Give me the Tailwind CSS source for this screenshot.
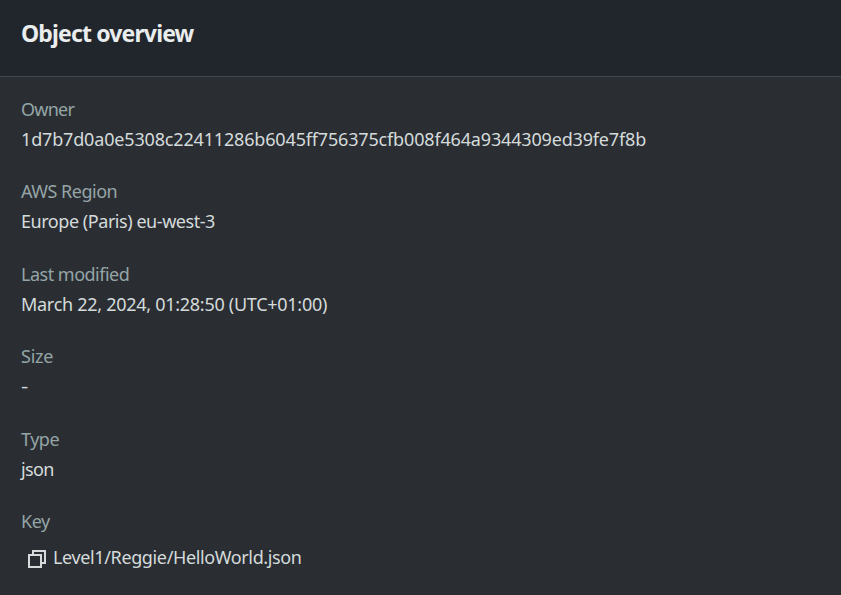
<!DOCTYPE html>
<html lang="en"><head><meta charset="utf-8"><title>Object overview</title>
<script src="https://cdn.jsdelivr.net/npm/@tailwindcss/browser@4"></script></head>
<body class="h-screen overflow-hidden bg-[#2a2e33] font-['Noto_Sans','Open_Sans',sans-serif] text-[#d5dbdb]">
<header class="h-[77px] border-b border-[#414750] bg-[#21252c] px-[21px] pt-[16px]">
<h1 class="text-[23px] leading-[34px] font-bold tracking-[-0.85px] text-[#eaeded]">Object overview</h1>
</header>
<dl class="flex flex-col gap-[22.5px] px-[21px] pt-[16.6px] text-[18px] leading-[30px]">
<div><dt class="tracking-[-0.75px] text-[#95a5a6]">Owner</dt><dd class="tracking-[-0.165px]">1d7b7d0a0e5308c22411286b6045ff756375cfb008f464a9344309ed39fe7f8b</dd></div>
<div><dt class="tracking-[-0.5px] text-[#95a5a6]">AWS Region</dt><dd class="tracking-[-0.45px]">Europe (Paris) eu-west-3</dd></div>
<div><dt class="tracking-[-0.5px] text-[#95a5a6]">Last modified</dt><dd class="tracking-[-0.28px]">March 22, 2024, 01:28:50 (UTC+01:00)</dd></div>
<div><dt class="tracking-[-0.25px] text-[#95a5a6]">Size</dt><dd class="w-fit origin-left scale-x-125">-</dd></div>
<div><dt class="tracking-[-0.5px] text-[#95a5a6]">Type</dt><dd class="tracking-[-0.6px]">json</dd></div>
<div><dt class="tracking-[-0.5px] text-[#95a5a6]">Key</dt><dd class="flex items-center pt-[6px] pl-[7px] tracking-[-0.37px]"><svg class="mt-[3px] mr-[7px] h-[18px] w-[18px]" viewBox="0 0 18 18" fill="none" stroke="currentColor" stroke-width="2" aria-hidden="true"><path d="M5 5V1H17V13H13M1 5H13V17H1Z"/></svg>Level1/Reggie/HelloWorld.json</dd></div>
</dl>
</body></html>
